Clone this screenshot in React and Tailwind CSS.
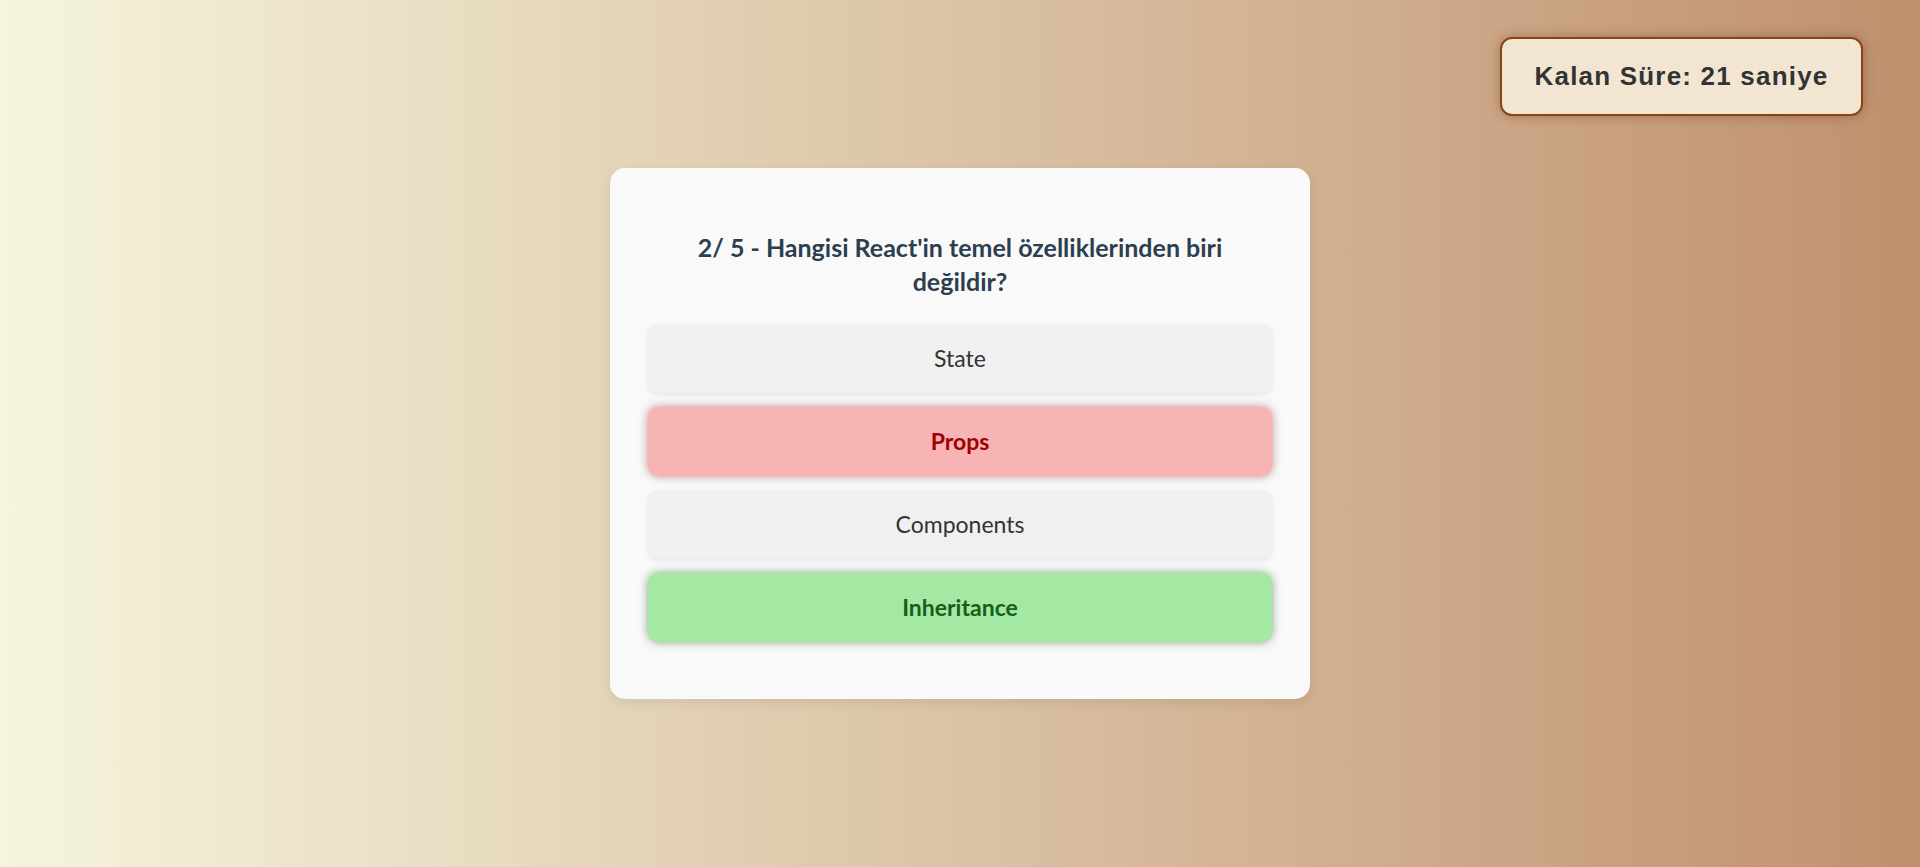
import React from "react";

const options = [
  { id: "state", label: "State", status: "idle" },
  { id: "props", label: "Props", status: "wrong" },
  { id: "components", label: "Components", status: "idle" },
  { id: "inheritance", label: "Inheritance", status: "correct" },
];

function OptionButton({ label, status }) {
  // pick colours for the answer state
  let look = "bg-[#f0f0f0] text-[#333] font-normal shadow-[0_2px_5px_rgba(0,0,0,0.08)]";
  if (status === "wrong") {
    look = "bg-[#f8b4b4] text-[#a00000] font-bold shadow-[0_0_10px_rgba(140,30,30,0.5)]";
  } else if (status === "correct") {
    look = "bg-[#a3e9a4] text-[#14601a] font-bold shadow-[0_0_10px_rgba(20,80,20,0.5)]";
  }

  return (
    <button
      type="button"
      className={`w-full h-[69px] rounded-[10px] text-[23px] font-['Lato',sans-serif] ${look}`}
    >
      {label}
    </button>
  );
}

export default function App() {
  return (
    <div className="relative min-h-screen flex items-center justify-center bg-[linear-gradient(to_right,#f5f5dc,#c0906e)]">
      {/* Timer badge */}
      <div className="absolute top-[37px] right-[57px] w-[363px] h-[79px] flex items-center justify-center rounded-[12px] border-2 border-[#8b4513] bg-[#f2e6d3] shadow-[0_0_12px_rgba(110,60,30,0.45)]">
        <span className="font-['Liberation_Sans',Arial,sans-serif] font-bold text-[26px] tracking-[1.2px] text-[#333]">
          Kalan Süre: 21 saniye
        </span>
      </div>

      {/* Quiz card */}
      <div className="w-[700px] rounded-[15px] bg-[#f9f9f9] shadow-[0_4px_12px_rgba(0,0,0,0.08)] px-[38px] pt-[62px] pb-[57px]">
        <h2 className="px-[34px] text-center font-['Lato',sans-serif] font-bold text-[25px] leading-[34px] text-[#2c3e50]">
          2/ 5 - Hangisi React'in temel özelliklerinden biri değildir?
        </h2>

        <div className="mt-[26px] flex flex-col gap-[14px]">
          {options.map((opt) => (
            <OptionButton key={opt.id} label={opt.label} status={opt.status} />
          ))}
        </div>
      </div>
    </div>
  );
}
